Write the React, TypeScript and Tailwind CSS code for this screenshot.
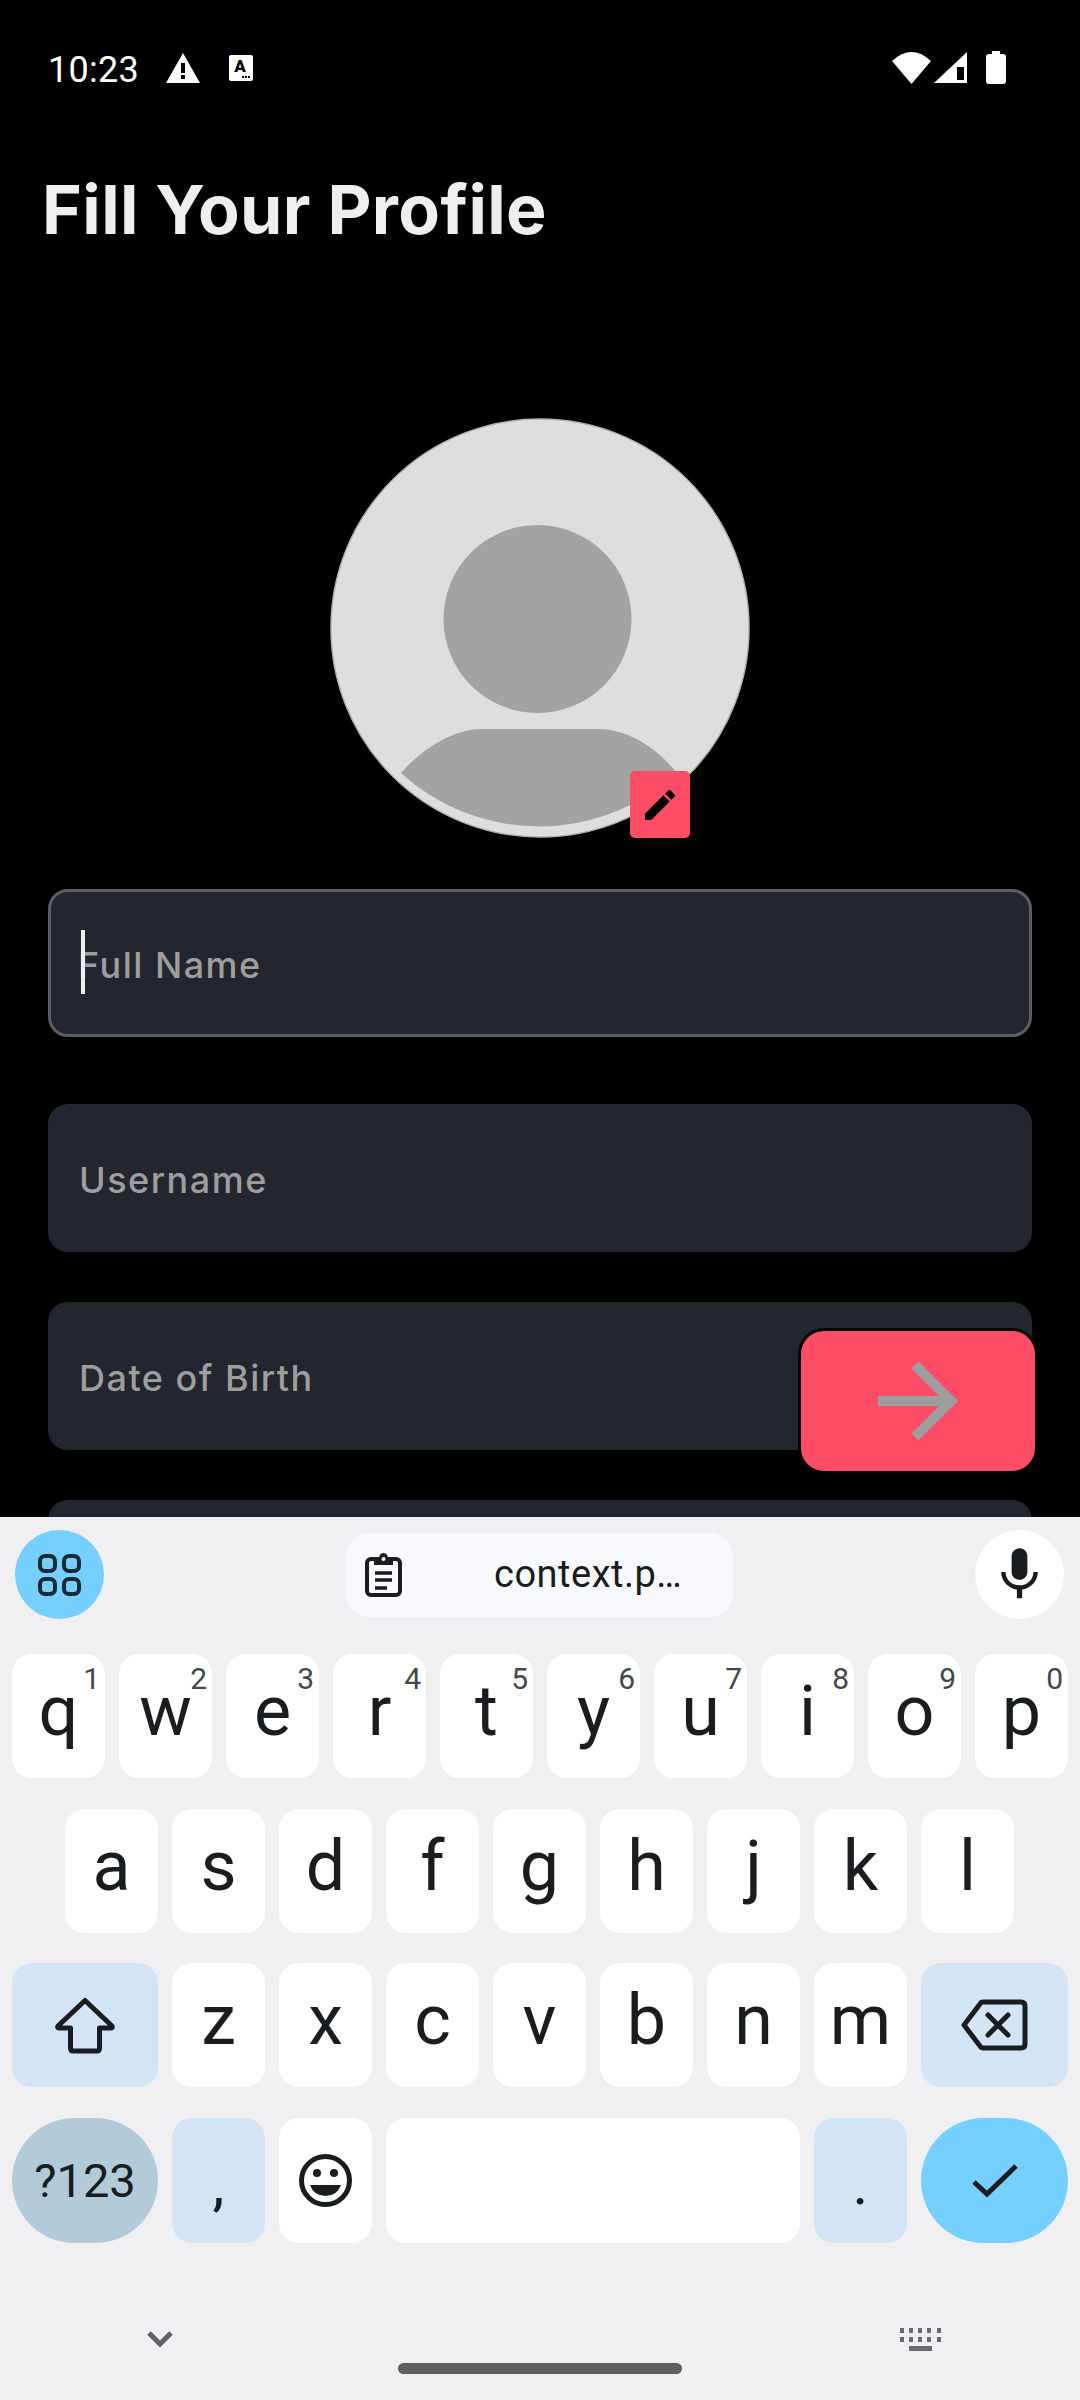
const row1 = [
  ['q', '1'],
  ['w', '2'],
  ['e', '3'],
  ['r', '4'],
  ['t', '5'],
  ['y', '6'],
  ['u', '7'],
  ['i', '8'],
  ['o', '9'],
  ['p', '0'],
];
const row2 = ['a', 's', 'd', 'f', 'g', 'h', 'j', 'k', 'l'];
const row3 = ['z', 'x', 'c', 'v', 'b', 'n', 'm'];

function Key({ label, hint }: { label: string; hint?: string }) {
  return (
    <div className="relative flex h-[124px] w-[93px] items-center justify-center rounded-[20px] bg-white pb-[10px] text-[70px] leading-none text-[#1a1d20]">
      {label}
      {hint && (
        <span className="absolute right-[5px] top-[10px] text-[30px] leading-[30px] text-[#44474a]">{hint}</span>
      )}
    </div>
  );
}

function Field({ label, focused, className }: { label: string; focused?: boolean; className: string }) {
  return (
    <div
      className={`relative flex h-[148px] items-center rounded-[20px] bg-[#23262f] pt-[4px] font-[Inter] text-[36px] font-medium tracking-[1.5px] text-[#9e9e9e] ${className} ${
        focused ? 'border-[3px] border-[#5b5d64] pl-[27px]' : 'pl-[31px]'
      }`}
    >
      {label}
      {focused && <div className="absolute left-[30px] top-[38px] h-[64px] w-[4px] bg-[#eeeeee]" />}
    </div>
  );
}

function Avatar() {
  return (
    <div className="relative mx-auto mt-[169px] h-[420px] w-[420px]">
      <svg width="420" height="420" viewBox="0 0 420 420">
        <circle cx="210" cy="210" r="209" fill="#dedede" stroke="#b4b4b4" strokeWidth="1.5" />
        <circle cx="207.5" cy="201" r="94" fill="#a3a3a3" />
        <path
          d="M71 355C95 328 125 311 153 311H267C297 311 325 328 347 355A205 205 0 0 1 71 355Z"
          fill="#a3a3a3"
        />
      </svg>
      <div className="absolute left-[300px] top-[353px] flex h-[67px] w-[60px] items-center justify-center rounded-[5px] bg-[#ff4d67]">
        <svg width="40" height="40" viewBox="0 0 24 24" fill="#000000">
          <path d="M3 17.25V21h3.75L17.81 9.94l-3.75-3.75L3 17.25zM20.71 7.04c.39-.39.39-1.02 0-1.41l-2.34-2.34c-.39-.39-1.02-.39-1.41 0l-1.83 1.83 3.75 3.75 1.83-1.83z" />
        </svg>
      </div>
    </div>
  );
}

function StatusBar() {
  return (
    <div className="flex h-[33px] items-center pl-[48px] pr-[74px] font-[Roboto] text-white">
      <span className="mt-[5px] w-[90px] text-[36px] leading-none tracking-[0.3px]">10:23</span>
      <svg className="ml-[28px]" width="34" height="30" viewBox="0 0 34 30">
        <path d="M17 0L34 30H0Z" fill="#ffffff" />
        <rect x="15" y="10" width="4" height="10" fill="#000000" />
        <rect x="15" y="22" width="4" height="4" fill="#000000" />
      </svg>
      <svg className="ml-[29px]" width="24" height="26" viewBox="0 0 24 26">
        <rect width="24" height="26" rx="2" fill="#ffffff" />
        <text x="11" y="17" textAnchor="middle" fontFamily="Roboto" fontWeight="900" fontSize="17" fill="#000000">
          A
        </text>
        <rect x="13" y="21" width="2" height="2" fill="#000000" />
        <rect x="16" y="21" width="2" height="2" fill="#000000" />
        <rect x="19" y="21" width="2" height="2" fill="#000000" />
      </svg>
      <svg className="ml-auto" width="39" height="32" viewBox="0 0 39 32">
        <path d="M0 9Q19.5 -9 39 9L19.5 32Z" fill="#ffffff" />
      </svg>
      <svg className="ml-[3px]" width="33" height="31" viewBox="0 0 33 31">
        <path d="M33 0V31H0Z" fill="#ffffff" />
        <rect x="23" y="15" width="7" height="13" fill="#000000" />
      </svg>
      <svg className="ml-[19px]" width="20" height="33" viewBox="0 0 20 33">
        <path d="M6 0H14V3H17Q20 3 20 6V30Q20 33 17 33H3Q0 33 0 30V6Q0 3 3 3H6Z" fill="#ffffff" />
      </svg>
    </div>
  );
}

function SuggestionRow() {
  return (
    <div className="flex items-center justify-between pl-[15px] pr-[16px] pt-[13px]">
      <div className="flex h-[89px] w-[89px] items-center justify-center rounded-full bg-[#76d0ff]">
        <svg width="43" height="42" viewBox="0 0 43 42" fill="none" stroke="#1a2a33" strokeWidth="4">
          <rect x="2" y="2" width="15" height="15" rx="5" />
          <rect x="26" y="2" width="15" height="15" rx="5" />
          <rect x="2" y="25" width="15" height="15" rx="5" />
          <rect x="26" y="25" width="15" height="15" rx="5" />
        </svg>
      </div>
      <div className="flex h-[84px] w-[387px] items-center rounded-[24px] bg-[#f8f9fd] pl-[19px] font-[Roboto] text-[38px] tracking-[0.5px] text-[#1a1d20]">
        <svg width="37" height="44" viewBox="0 0 37 44" fill="none">
          <rect x="2" y="6" width="33" height="36" rx="4" stroke="#1a1d20" strokeWidth="4" />
          <path d="M9 6H14Q14 0 18.5 0T23 6H28V12H9Z" fill="#1a1d20" />
          <circle cx="18.500" cy="6" r="2" fill="#f8f9fd" />
          <path d="M10 20H27M10 27H27M10 35H22" stroke="#1a1d20" strokeWidth="3.500" />
        </svg>
        <span className="ml-[92px]">context.p…</span>
      </div>
      <div className="flex h-[89px] w-[89px] items-center justify-center rounded-full bg-white">
        <svg width="63" height="63" viewBox="0 0 24 24" fill="#1a1d20">
          <path d="M12 14c1.66 0 3-1.34 3-3V5c0-1.66-1.34-3-3-3S9 3.34 9 5v6c0 1.66 1.34 3 3 3zm5.3-3c0 3-2.54 5.100-5.300 5.100S6.700 14 6.700 11H5c0 3.410 2.720 6.230 6 6.720V21h2v-3.280c3.280-.48 6-3.300 6-6.720h-1.700z" />
        </svg>
      </div>
    </div>
  );
}

function Keyboard() {
  return (
    <div className="h-[883px] bg-[#f0f0f3] font-[Roboto]">
      <SuggestionRow />

      <div className="mt-[35px] flex flex-col gap-[31px]">
        <div className="flex gap-[14px] pl-[12px]">
          {row1.map(([label, hint]) => (
            <Key key={label} label={label} hint={hint} />
          ))}
        </div>

        <div className="flex gap-[14px] pl-[65px]">
          {row2.map((label) => (
            <Key key={label} label={label} />
          ))}
        </div>

        <div className="-mt-px flex gap-[14px] pl-[12px]">
          <div className="flex h-[124px] w-[146px] items-center justify-center rounded-[20px] bg-[#d3e5f4]">
            <svg width="60" height="57" viewBox="0 0 60 57" fill="none" stroke="#1a1d20" strokeWidth="5" strokeLinejoin="round">
              <path d="M30 3.500L57 29Q58 31 56 31H44.500V51Q44.500 54 42 54H18Q15.500 54 15.500 51V31H4Q2 31 3 29Z" />
            </svg>
          </div>
          {row3.map((label) => (
            <Key key={label} label={label} />
          ))}
          <div className="flex h-[124px] w-[147px] items-center justify-center rounded-[20px] bg-[#d3e5f4]">
            <svg width="67" height="52" viewBox="0 0 67 52" fill="none" stroke="#1a1d20" strokeWidth="5" strokeLinecap="round" strokeLinejoin="round">
              <path d="M22 3H60Q64 3 64 7V45Q64 49 60 49H22Q20 49 19 47L3 26L19 5Q20 3 22 3Z" />
              <path d="M27 16L47 36M47 16L27 36" />
            </svg>
          </div>
        </div>

        <div className="flex gap-[14px] pl-[12px]">
          <div className="flex h-[125px] w-[146px] items-center justify-center rounded-full bg-[#b3cbd9] text-[47px] leading-none text-[#1a1d20]">
            ?123
          </div>
          <div className="flex h-[125px] w-[93px] items-center justify-center rounded-[20px] bg-[#d3e5f4] pt-[6px] text-[60px] leading-none text-[#1a1d20]">
            ,
          </div>
          <div className="flex h-[125px] w-[93px] items-center justify-center rounded-[20px] bg-white">
            <svg width="53" height="53" viewBox="0 0 53 53">
              <circle cx="26.500" cy="26.500" r="24" fill="none" stroke="#1a1d20" strokeWidth="5" />
              <circle cx="18" cy="19" r="4" fill="#1a1d20" />
              <circle cx="35" cy="19" r="4" fill="#1a1d20" />
              <path d="M11 31H42Q38 42 26.500 42T11 31Z" fill="#1a1d20" />
            </svg>
          </div>
          <div className="h-[125px] w-[414px] rounded-[20px] bg-white" />
          <div className="flex h-[125px] w-[93px] items-center justify-center rounded-[20px] bg-[#d3e5f4] pt-[6px] text-[60px] leading-none text-[#1a1d20]">
            .
          </div>
          <div className="flex h-[125px] w-[147px] items-center justify-center rounded-full bg-[#76d0ff]">
            <svg width="46" height="36" viewBox="0 0 46 36" fill="none" stroke="#1a1d20" strokeWidth="5">
              <path d="M2 19L15 31L44 3" />
            </svg>
          </div>
        </div>
      </div>

      <div className="mt-[83px] flex h-[26px] items-center justify-between pl-[147px] pr-[139px]">
        <svg width="26" height="16" viewBox="0 0 26 16" fill="none" stroke="#5f6368" strokeWidth="5">
          <path d="M2 2L13 13L24 2" />
        </svg>
        <svg width="41" height="23" viewBox="0 0 41 23" fill="#6b6b6f">
          <path d="M0 0h4v5H0zM9 0h4v5H9zM18 0h4v5h-4zM27 0h4v5h-4zM37 0h4v5h-4zM0 9h4v5H0zM9 9h4v5H9zM18 9h4v5h-4zM27 9h4v5h-4zM37 9h4v5h-4zM9 18h23v5H9z" />
        </svg>
      </div>
      <div className="mx-auto mt-[11px] h-[11px] w-[284px] rounded-full bg-[#5f5f5f]" />
    </div>
  );
}

export default function App() {
  return (
    <div className="h-[2400px] w-[1080px] overflow-hidden bg-black">
      <div className="relative h-[1517px] overflow-hidden pt-[51px]">
        <StatusBar />
        <h1 className="ml-[42px] mt-[85px] font-[Inter] text-[68px] font-bold leading-[80px] tracking-[0.4px] text-[#eeeeee]">
          Fill Your Profile
        </h1>
        <Avatar />
        <div className="mt-[51px] flex flex-col px-[48px]">
          <Field label="Full Name" focused className="" />
          <Field label="Username" className="mt-[67px]" />
          <Field label="Date of Birth" className="mt-[50px]" />
          <div className="mt-[50px] h-[148px] rounded-[20px] bg-[#23262f]" />
        </div>

        <div className="absolute bottom-[43px] right-[42px] flex h-[146px] w-[240px] items-center justify-center rounded-[26px] border-[3px] border-black bg-[#ff4d67]">
          <svg width="80" height="80" viewBox="0 0 80 80" fill="none" stroke="#9e9e9e" strokeWidth="10">
            <path d="M0 40H72" />
            <path d="M37 4L73 40L37 76" />
          </svg>
        </div>
      </div>
      <Keyboard />
    </div>
  );
}
